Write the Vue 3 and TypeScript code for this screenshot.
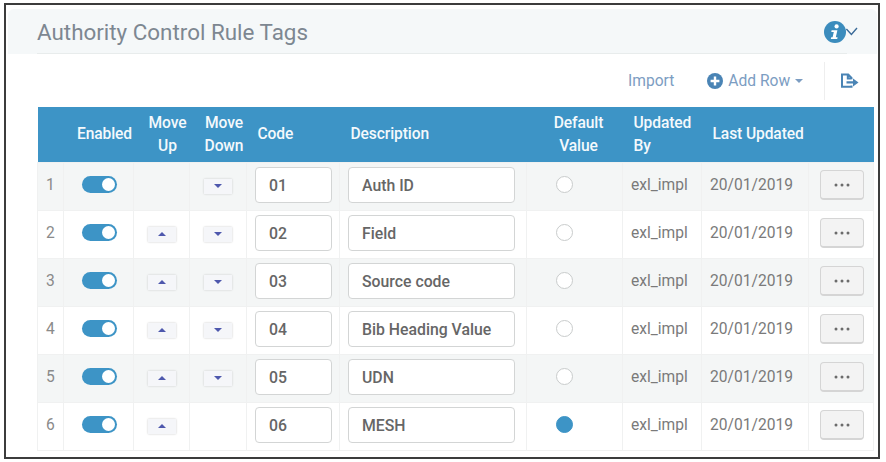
<script setup lang="ts">
interface Row {
  code: string;
  description: string;
  up: boolean;
  down: boolean;
  isDefault: boolean;
}

const rows: Row[] = [
  { code: '01', description: 'Auth ID', up: false, down: true, isDefault: false },
  { code: '02', description: 'Field', up: true, down: true, isDefault: false },
  { code: '03', description: 'Source code', up: true, down: true, isDefault: false },
  { code: '04', description: 'Bib Heading Value', up: true, down: true, isDefault: false },
  { code: '05', description: 'UDN', up: true, down: true, isDefault: false },
  { code: '06', description: 'MESH', up: true, down: false, isDefault: true },
];
</script>

<template>
  <div class="frame">
    <div class="panel-head">
      <h1 class="title">Authority Control Rule Tags</h1>
      <svg class="info" width="35" height="22" viewBox="0 0 35 22">
        <circle cx="11" cy="11" r="11" fill="#3b8cbd" />
        <circle cx="12.6" cy="5.4" r="2.1" fill="#fff" />
        <path d="M7.6 9.2h5.8l-1.6 7h1.8l-.4 1.8H6.8l.4-1.8h1.4l1.2-5.2H7.3z" fill="#fff" />
        <path d="M22.4 8l5 5.4 5.6-6.4" fill="none" stroke="#3a6a98" stroke-width="1.4" />
      </svg>
    </div>

    <div class="toolbar">
      <a class="tool import">Import</a>
      <a class="tool add">
        <svg width="16" height="16" viewBox="0 0 16 16">
          <circle cx="8" cy="8" r="8" fill="#4a84b5" />
          <path d="M8 3.6v8.8M3.6 8h8.8" stroke="#fff" stroke-width="2.4" />
        </svg>
        <span>Add Row</span>
        <i class="caret"></i>
      </a>
      <span class="sep"></span>
      <svg class="export" width="19" height="16" viewBox="0 0 19 16">
        <path d="M11.5 12.5v1.2H2V1.5h6.2l3.3 3.3v1.4M7.8 1.5v4h3.7" fill="none" stroke="#4a84b5" stroke-width="2" />
        <path d="M6.5 8.2h6.5V5.4l5.5 4-5.5 4v-2.8H6.5z" fill="#4a84b5" />
      </svg>
    </div>

    <table class="grid">
      <colgroup>
        <col style="width: 26px" />
        <col style="width: 70px" />
        <col style="width: 56px" />
        <col style="width: 57px" />
        <col style="width: 93px" />
        <col style="width: 187px" />
        <col style="width: 96px" />
        <col style="width: 79px" />
        <col style="width: 107px" />
        <col />
      </colgroup>
      <thead>
        <tr>
          <th></th>
          <th class="shift">Enabled</th>
          <th class="shift">Move<br />Up</th>
          <th class="shift">Move<br />Down</th>
          <th class="left">Code</th>
          <th class="left">Description</th>
          <th class="shift-sm">Default<br />Value</th>
          <th class="left">Updated<br />By</th>
          <th class="left">Last Updated</th>
          <th></th>
        </tr>
      </thead>
      <tbody>
        <tr v-for="(row, index) in rows" :key="row.code">
          <td class="num">{{ index + 1 }}</td>
          <td class="toggle-cell"><span class="toggle"></span></td>
          <td>
            <span v-if="row.up" class="move"><i class="tri up"></i></span>
          </td>
          <td>
            <span v-if="row.down" class="move"><i class="tri down"></i></span>
          </td>
          <td class="input-cell"><div class="input code">{{ row.code }}</div></td>
          <td class="input-cell"><div class="input desc">{{ row.description }}</div></td>
          <td class="radio-cell">
            <span class="radio" :class="{ on: row.isDefault }"></span>
          </td>
          <td class="text">exl_impl</td>
          <td class="text">20/01/2019</td>
          <td class="more-cell">
            <span class="more">
              <svg width="16" height="4" viewBox="0 0 16 4">
                <circle cx="2" cy="2" r="1.5" fill="#6b6b6b" />
                <circle cx="8" cy="2" r="1.5" fill="#6b6b6b" />
                <circle cx="14" cy="2" r="1.5" fill="#6b6b6b" />
              </svg>
            </span>
          </td>
        </tr>
      </tbody>
    </table>
  </div>
</template>

<style>
html,
body {
  margin: 0;
  background: #fff;
}
</style>

<style scoped>
.frame {
  box-sizing: border-box;
  width: 876px;
  height: 456px;
  margin: 3px 0 0 4px;
  border: 2px solid #3c3c3c;
  padding: 4px 1px 0 2px;
  font-family: Roboto, "Liberation Sans", sans-serif;
  color: #6b6b6b;
}

.panel-head {
  position: relative;
  display: flex;
  align-items: center;
  justify-content: space-between;
  height: 45px;
  padding: 0 18px 0 29px;
  background: #f5f8f9;
  border-radius: 6px 6px 0 0;
  box-sizing: border-box;
}

.panel-head::after {
  content: "";
  position: absolute;
  left: 29px;
  right: 30px;
  bottom: 0;
  height: 1px;
  background: #e8ecec;
}

.title {
  margin: 0;
  font-size: 22.4px;
  font-weight: 400;
  color: #7d8791;
}

.toolbar {
  display: flex;
  align-items: center;
  height: 53px;
  padding-left: 620px;
  box-sizing: border-box;
  font-size: 15.6px;
  color: #7c9dc2;
}

.tool {
  display: flex;
  align-items: center;
}

.add {
  margin-left: 33px;
  gap: 5px;
}

.caret {
  width: 0;
  height: 0;
  border-left: 4px solid transparent;
  border-right: 4px solid transparent;
  border-top: 4px solid #7c9dc2;
}

.sep {
  width: 1px;
  height: 38px;
  margin-left: 21px;
  background: #eeeeee;
}

.export {
  margin-left: 15px;
}

.grid {
  width: 837px;
  margin-left: 29px;
  table-layout: fixed;
  border-collapse: collapse;
}

.grid th {
  height: 55px;
  padding: 0;
  background: #3d94c6;
  color: #f4f9fc;
  font-size: 15.6px;
  font-weight: 500;
  line-height: 23px;
  letter-spacing: -0.1px;
  text-align: center;
}

.grid th.shift {
  padding-left: 12px;
}

.grid th.shift-sm {
  padding-left: 8px;
}

.grid th.left {
  text-align: left;
  padding-left: 11px;
}

.grid td {
  height: 48px;
  padding: 0 0 3px;
  border: 1px solid #f0f1f1;
  text-align: center;
  box-sizing: border-box;
}

.grid tbody tr:nth-child(odd) td {
  background: #f4f6f6;
}

.grid td.num {
  font-size: 15.6px;
  color: #8a8a8a;
}

.grid td.toggle-cell {
  padding-left: 2px;
}

.toggle {
  position: relative;
  display: inline-block;
  width: 35px;
  height: 17px;
  vertical-align: -2px;
  border-radius: 9px;
  background: #3d94c6;
}

.toggle::after {
  content: "";
  position: absolute;
  top: 2px;
  right: 2px;
  width: 13px;
  height: 13px;
  border-radius: 50%;
  background: #fff;
}

.move {
  display: inline-flex;
  align-items: center;
  justify-content: center;
  width: 28px;
  height: 15px;
  vertical-align: middle;
  background: #f5f6f9;
  box-shadow: 0 0 2px #c9c9c9;
}

.tri {
  width: 0;
  height: 0;
  border-left: 4px solid transparent;
  border-right: 4px solid transparent;
}

.tri.up {
  border-bottom: 4px solid #4e58ad;
}

.tri.down {
  border-top: 4px solid #4e58ad;
}

.grid td.input-cell {
  text-align: left;
  padding-left: 8px;
}

.input {
  box-sizing: border-box;
  display: flex;
  align-items: center;
  height: 36px;
  padding-left: 13px;
  background: #fff;
  border: 1px solid #d3d5d5;
  border-radius: 4px;
  font-size: 15.8px;
  font-weight: 500;
  color: #666;
}

.code {
  width: 77px;
}

.desc {
  width: 167px;
}

.grid td.radio-cell {
  padding-right: 20px;
}

.radio {
  display: inline-block;
  box-sizing: border-box;
  width: 17px;
  height: 17px;
  vertical-align: -2px;
  border: 1px solid #c9cccc;
  border-radius: 50%;
  background: #fff;
}

.radio.on {
  border-color: #3d94c6;
  background: #3d94c6;
}

.grid td.text {
  font-size: 15.6px;
  color: #7a7a7a;
  text-align: left;
  padding-left: 8px;
}

.grid td.more-cell {
  padding-left: 2px;
}

.more {
  display: inline-flex;
  align-items: center;
  justify-content: center;
  box-sizing: border-box;
  width: 44px;
  height: 30px;
  vertical-align: middle;
  background: #f3f3f3;
  border: 1px solid #d5d5d5;
  border-bottom-width: 2px;
  border-radius: 4px;
}
</style>
